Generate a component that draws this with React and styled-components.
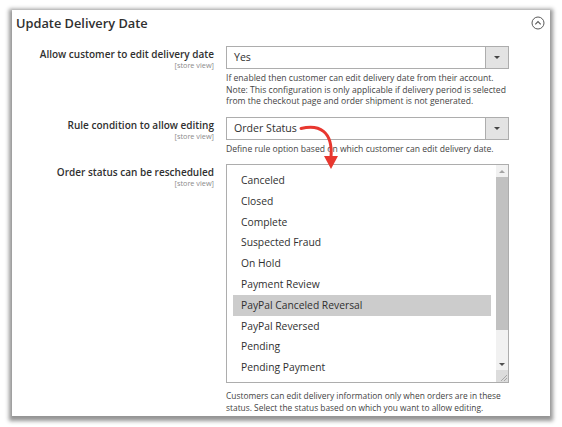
import React from "react";
import styled, { createGlobalStyle } from "styled-components";

const Global = createGlobalStyle`
  html, body { margin: 0; padding: 0; background: #fff; }
  body { font-family: "Open Sans", "Noto Sans", sans-serif; color: #303030; }
`;

const Page = styled.div`
  width: 562px;
  height: 427px;
  padding: 10px 12px 0 12px;
  box-sizing: border-box;
`;

const Panel = styled.div`
  position: relative;
  width: 538px;
  height: 406px;
  background: #fff;
  box-shadow: 0 2px 4px 3px rgba(0, 0, 0, 0.42);
  box-sizing: border-box;
`;

const Header = styled.div`
  display: flex;
  align-items: center;
  justify-content: space-between;
  height: 24px;
  padding: 1px 5px 0 4px;
`;

const Title = styled.div`
  font-size: 12.8px;
  font-weight: 600;
  color: #303030;
`;

const Form = styled.div`
  display: flex;
  flex-direction: column;
  gap: 9px;
  padding-top: 11px;
`;

const Row = styled.div`
  display: grid;
  grid-template-columns: 202px 283px;
  column-gap: 12px;
`;

const LabelCell = styled.div`
  text-align: right;
  padding-top: 2px;
`;

const LabelText = styled.div`
  font-size: 10px;
  font-weight: 600;
  color: #303030;
  line-height: 13px;
`;

const Scope = styled.div`
  font-size: 7.3px;
  color: #8a8a8a;
  line-height: 9px;
`;

const Control = styled.div`
  display: flex;
  flex-direction: column;
`;

const Select = styled.div`
  display: flex;
  height: 23px;
  border: 1px solid #adadad;
  box-sizing: border-box;
`;

const SelectValue = styled.div`
  flex: 1;
  font-size: 10.6px;
  line-height: 21px;
  padding-left: 7px;
  color: #303030;
`;

const SelectButton = styled.div`
  width: 22px;
  background: #e3e3e3;
  border-left: 1px solid #adadad;
  display: flex;
  align-items: center;
  justify-content: center;
`;

const Caret = styled.div`
  width: 0;
  height: 0;
  border-left: 3px solid transparent;
  border-right: 3px solid transparent;
  border-top: 3.5px solid #444;
`;

const Note = styled.div`
  font-size: ${(p) => p.$size || 8.6}px;
  line-height: 11.5px;
  color: #444;
  padding-top: ${(p) => p.$top || 4}px;
  white-space: nowrap;
`;

const Multi = styled.div`
  position: relative;
  display: flex;
  height: 219px;
  border: 1px solid #adadad;
  box-sizing: border-box;
  padding: 5px 0 0 6px;
`;

const List = styled.div`
  width: 258px;
  display: flex;
  flex-direction: column;
`;

const Item = styled.div`
  height: 20.8px;
  line-height: 20.8px;
  font-size: 10.3px;
  padding-left: 8px;
  color: #303030;
  background: ${(p) => (p.$selected ? "#cccccc" : "transparent")};
`;

const Scrollbar = styled.div`
  position: absolute;
  top: 0;
  right: 0;
  width: 12px;
  bottom: 0;
  background: #f1f1f1;
  display: flex;
  flex-direction: column;
  align-items: center;
`;

const ScrollArrow = styled.div`
  height: 12px;
  width: 12px;
  display: flex;
  align-items: center;
  justify-content: center;
  &::after {
    content: "";
    border-left: 3px solid transparent;
    border-right: 3px solid transparent;
    ${(p) => (p.$up ? "border-bottom: 3px solid #a3a3a3;" : "border-top: 3px solid #505050;")}
  }
`;

const Thumb = styled.div`
  width: 12px;
  height: 153px;
  background: #c1c1c1;
`;

const ScrollSpacer = styled.div`
  flex: 1;
`;

const Grip = styled.svg`
  width: 12px;
  height: 12px;
  background: #dcdcdc;
`;

const ArrowOverlay = styled.svg`
  position: absolute;
  left: 0;
  top: 0;
  pointer-events: none;
`;

const items = [
  "Canceled",
  "Closed",
  "Complete",
  "Suspected Fraud",
  "On Hold",
  "Payment Review",
  "PayPal Canceled Reversal",
  "PayPal Reversed",
  "Pending",
  "Pending Payment",
];

function Field({ label, children }) {
  return (
    <Row>
      <LabelCell>
        <LabelText>{label}</LabelText>
        <Scope>[store view]</Scope>
      </LabelCell>
      <Control>{children}</Control>
    </Row>
  );
}

function Dropdown({ value }) {
  return (
    <Select>
      <SelectValue>{value}</SelectValue>
      <SelectButton>
        <Caret />
      </SelectButton>
    </Select>
  );
}

export default function App() {
  return (
    <>
      <Global />
      <Page>
        <Panel>
          <Header>
            <Title>Update Delivery Date</Title>
            <svg width="14" height="14" viewBox="0 0 14 14">
              <circle cx="7" cy="7" r="6" fill="none" stroke="#5a5a5a" strokeWidth="1" />
              <path d="M4.3 8.3 L7 5.6 L9.7 8.3" fill="none" stroke="#5a5a5a" strokeWidth="1.1" />
            </svg>
          </Header>
          <Form>
            <Field label="Allow customer to edit delivery date">
              <Dropdown value="Yes" />
              <Note>
                If enabled then customer can edit delivery date from their account.
                <br />
                Note: This configuration is only applicable if delivery period is selected
                <br />
                from the checkout page and order shipment is not generated.
              </Note>
            </Field>
            <Field label="Rule condition to allow editing">
              <Dropdown value="Order Status" />
              <Note>Define rule option based on which customer can edit delivery date.</Note>
            </Field>
            <Field label="Order status can be rescheduled">
              <Multi>
                <List>
                  {items.map((it) => (
                    <Item key={it} $selected={it === "PayPal Canceled Reversal"}>
                      {it}
                    </Item>
                  ))}
                </List>
                <Scrollbar>
                  <ScrollArrow $up />
                  <Thumb />
                  <ScrollSpacer />
                  <ScrollArrow />
                  <Grip viewBox="0 0 12 12">
                    <path d="M11 5 L5 11 M11 8 L8 11" stroke="#999" strokeWidth="0.8" />
                  </Grip>
                </Scrollbar>
              </Multi>
              <Note $top={7} $size={8.4}>
                Customers can edit delivery information only when orders are in these
                <br />
                status. Select the status based on which you want to allow editing.
              </Note>
            </Field>
          </Form>
          <ArrowOverlay width="538" height="406" viewBox="0 0 538 406">
            <path
              d="M289 118.5 C307 114 321 121 319 147"
              fill="none"
              stroke="#e8372f"
              strokeWidth="3"
              strokeLinecap="round"
            />
            <path d="M312 146 L326 146 L319 159 Z" fill="#e8372f" />
          </ArrowOverlay>
        </Panel>
      </Page>
    </>
  );
}
